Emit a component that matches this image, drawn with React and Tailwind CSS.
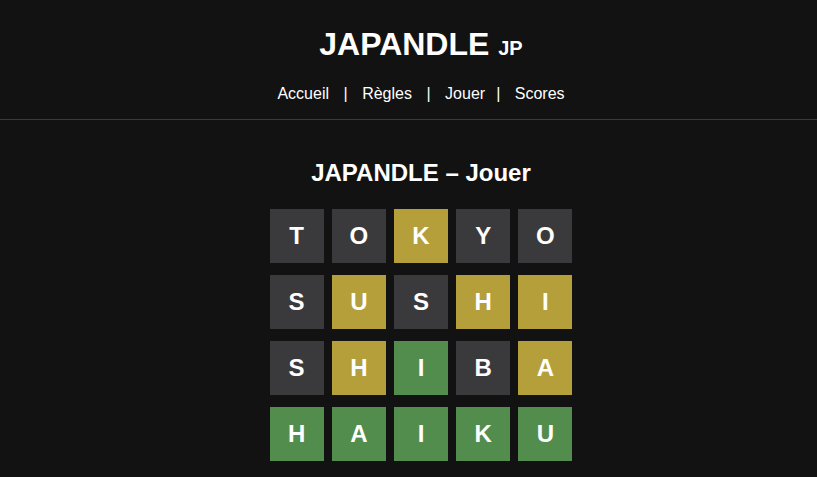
const ROWS = [
  [['T', 'x'], ['O', 'x'], ['K', 'y'], ['Y', 'x'], ['O', 'x']],
  [['S', 'x'], ['U', 'y'], ['S', 'x'], ['H', 'y'], ['I', 'y']],
  [['S', 'x'], ['H', 'y'], ['I', 'g'], ['B', 'x'], ['A', 'y']],
  [['H', 'g'], ['A', 'g'], ['I', 'g'], ['K', 'g'], ['U', 'g']],
];

const TILE_BG = {
  x: 'bg-[#3a3a3c]',
  y: 'bg-[#b59f3b]',
  g: 'bg-[#538d4e]',
};

function Tile({ letter, state }) {
  return (
    <div
      className={`w-[54px] h-[54px] flex items-center justify-center text-white font-bold text-[24px] leading-none ${TILE_BG[state]}`}
    >
      {letter}
    </div>
  );
}

export default function App() {
  return (
    <div
      className="min-h-screen bg-[#121212] text-white overflow-hidden"
      style={{ fontFamily: '"Liberation Sans", Arial, sans-serif' }}
    >
      <div className="w-[842px]">
        {/* en-tête */}
        <header className="pt-[25px] pb-[15px] border-b border-[#3a3a3c] flex flex-col items-center">
          <h1 className="text-[32px] leading-[38px] font-bold">
            JAPANDLE <span className="text-[20px]">JP</span>
          </h1>
          <nav className="mt-[17px] flex text-[16px] leading-[20px]">
            <a>Accueil</a>
            <span className="mx-[14.5px]">|</span>
            <a>Règles</a>
            <span className="mx-[14.5px]">|</span>
            <a>Jouer</a>
            <span className="ml-[11px] mr-[14.5px]">|</span>
            <a>Scores</a>
          </nav>
        </header>

        <main className="pt-[39px] flex flex-col items-center">
          <h2 className="text-[24px] leading-[28px] font-bold">JAPANDLE – Jouer</h2>
          <div className="mt-[22px] grid grid-cols-5 gap-x-[8.2px] gap-y-[12px]">
            {ROWS.map((row, i) =>
              row.map(([letter, state], j) => (
                <Tile key={`${i}-${j}`} letter={letter} state={state} />
              ))
            )}
          </div>
        </main>
      </div>
    </div>
  );
}
